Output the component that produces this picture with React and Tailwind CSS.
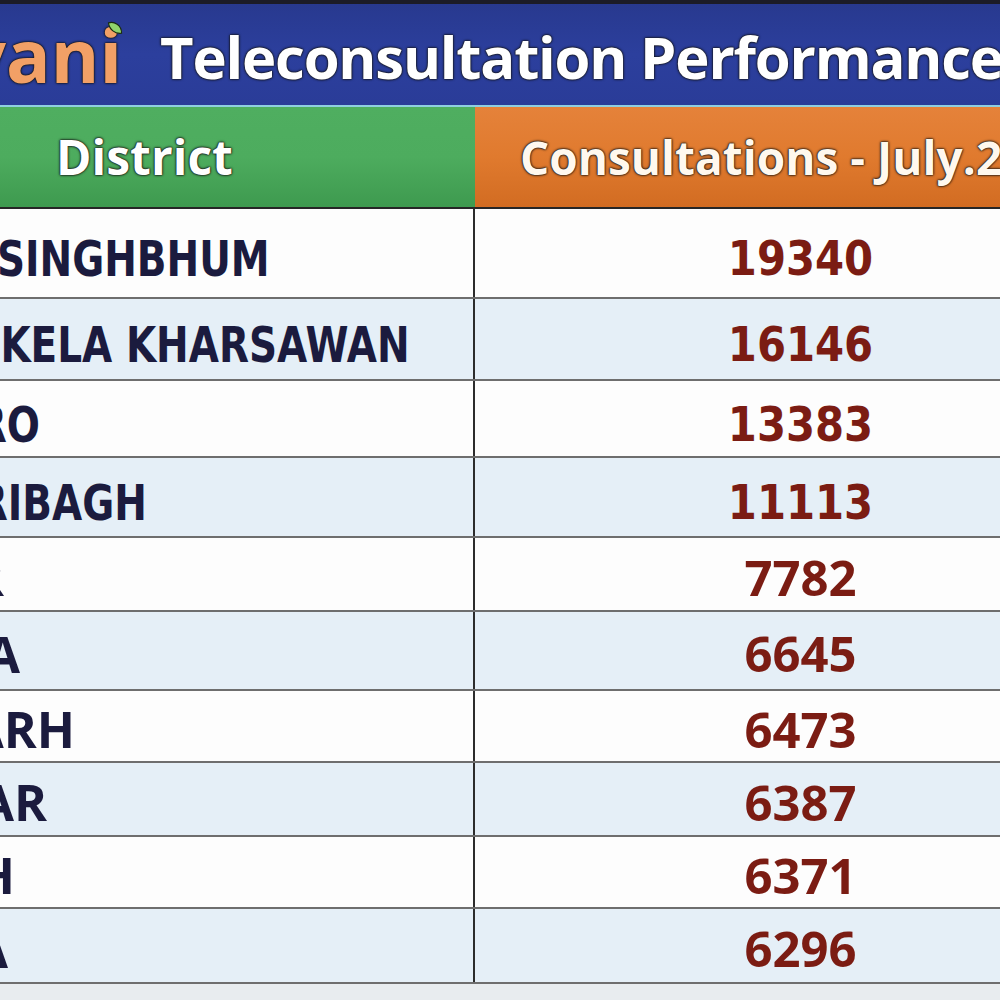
import React from 'react'

// visible part of the sheet; the left of the district column and the right of the
// consultations column run off the frame
const ROWS = [
  { name: 'SINGHBHUM', value: '19340', h: 'h-[90px]', bg: 'bg-[#fdfdfd]', end: 'w-[456px]', old: true },
  { name: 'KELA KHARSAWAN', value: '16146', h: 'h-[82px]', bg: 'bg-[#e5eff7]', end: 'w-[596px]', old: true },
  { name: 'RO', value: '13383', h: 'h-[77px]', bg: 'bg-[#fdfdfd]', end: 'w-[226px]', old: true },
  { name: 'RIBAGH', value: '11113', h: 'h-[80px]', bg: 'bg-[#e5eff7]', end: 'w-[333px]', old: true },
  { name: 'R', value: '7782', h: 'h-[74px]', bg: 'bg-[#fdfdfd]', end: 'w-[190px]' },
  { name: 'A', value: '6645', h: 'h-[79px]', bg: 'bg-[#e5eff7]', end: 'w-[206px]' },
  { name: 'ARH', value: '6473', h: 'h-[72px]', bg: 'bg-[#fdfdfd]', end: 'w-[261px]' },
  { name: 'AR', value: '6387', h: 'h-[74px]', bg: 'bg-[#e5eff7]', end: 'w-[233px]' },
  { name: 'H', value: '6371', h: 'h-[72px]', bg: 'bg-[#fdfdfd]', end: 'w-[201px]' },
  { name: 'A', value: '6296', h: 'h-[75px]', bg: 'bg-[#e5eff7]', end: 'w-[194px]' },
]

const outline = '[text-shadow:0_0_3px_#141414,0_0_2px_#141414,0_0_1px_#141414]'

function Leaf() {
  return (
    <svg className="absolute right-[-2px] top-[3px] w-[18px] h-[15px]" viewBox="0 0 18 16">
      <path d="M2 2 C8 0 16 4 16 13 C9 14 3 9 2 2 Z" fill="#8fd46c" stroke="#1a2a10" strokeWidth="1.2" />
    </svg>
  )
}

function Row({ row }) {
  const nameFont = row.old
    ? "font-['DejaVu_Sans',sans-serif] text-[50px] scale-x-[0.78]"
    : "font-['Open_Sans',sans-serif] text-[50px]"
  const valueFont = row.old
    ? "font-['DejaVu_Sans',sans-serif] text-[48px] scale-x-[0.87]"
    : "font-['Open_Sans',sans-serif] text-[49px]"
  return (
    <div className={`grid grid-cols-[661px_651px] border-b-2 border-[#6e6e6e] ${row.h} ${row.bg}`}>
      <div className="flex items-center border-r-2 border-[#2c2c2c] overflow-hidden">
        <div className={`${row.end} shrink-0 text-right ${row.old ? 'pt-[12px]' : 'pt-[6px]'}`}>
          <span className={`inline-block origin-right font-bold leading-none text-[#1b1b3e] ${nameFont}`}>
            {row.name}
          </span>
        </div>
      </div>
      <div className={`flex items-center justify-center ${row.old ? 'pt-[10px]' : 'pt-[6px]'}`}>
        <span className={`inline-block font-bold leading-none text-[#7b1c13] ${valueFont}`}>
          {row.value}
        </span>
      </div>
    </div>
  )
}

export default function App() {
  return (
    <div className="w-[1000px] h-[1000px] overflow-hidden bg-[#e8ecef]">
      <div className="w-[1312px] ml-[-186px]">
        {/* title bar */}
        <div className="h-[105px] border-t-4 border-[#1c1c28] bg-linear-to-b from-[#28398f] via-[#2c3f9d] to-[#2a3c98] flex items-center">
          <div className="w-[308px] shrink-0 text-right">
            <span className={`relative inline-block font-['Open_Sans',sans-serif] font-bold text-[74px] leading-none text-[#f2a066] ${outline}`}>
              vani
              <Leaf />
            </span>
          </div>
          <span className={`ml-[38px] pt-[4px] whitespace-nowrap font-['Open_Sans',sans-serif] font-bold text-[58px] tracking-[-1.2px] leading-none text-white ${outline}`}>
            Teleconsultation Performance
          </span>
        </div>
        <div className="h-[2px] bg-[#8fcfe0]" />

        {/* column heads */}
        <div className="grid grid-cols-[661px_651px] h-[102px] border-b-2 border-[#262626]">
          <div className="flex items-center justify-center bg-linear-to-b from-[#4fae60] via-[#4dac5e] to-[#3e9a4f]">
            <span className={`font-['Open_Sans',sans-serif] font-bold text-[48px] leading-none text-white ${outline}`}>
              District
            </span>
          </div>
          <div className="flex items-center justify-center bg-linear-to-b from-[#e5823a] via-[#e07a2e] to-[#d26c22]">
            <span className={`whitespace-nowrap font-['Open_Sans',sans-serif] font-bold text-[46px] leading-none text-[#fff8ee] ${outline}`}>
              Consultations - July.2023
            </span>
          </div>
        </div>

        {ROWS.map((row, i) => (
          <Row key={i} row={row} />
        ))}
      </div>
    </div>
  )
}
